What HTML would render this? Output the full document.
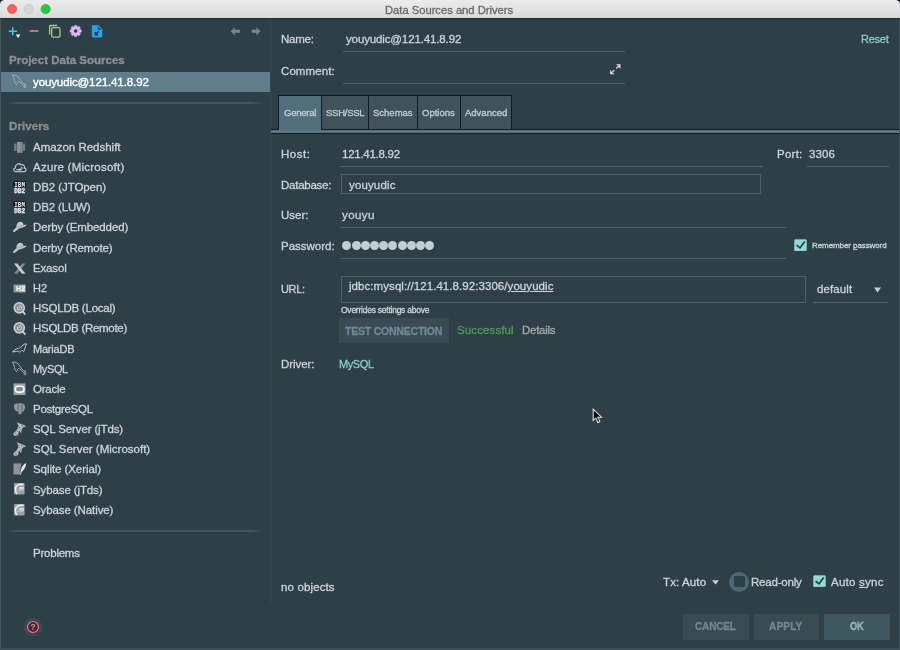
<!DOCTYPE html>
<html><head><meta charset="utf-8"><title>Data Sources and Drivers</title>
<style>
html,body{margin:0;padding:0;background:#2f3f47;}
body{width:900px;height:650px;position:relative;overflow:hidden;font-family:"Liberation Sans",sans-serif;}
.t{position:absolute;line-height:14px;white-space:nowrap;will-change:transform;-webkit-text-stroke:0.3px currentColor;}
.r{position:absolute;}
.ico{position:absolute;line-height:0;will-change:transform;}
#titlebar{position:absolute;left:0;top:0;width:900px;height:18px;background:linear-gradient(#ececec,#dadada);}
u{text-decoration:underline;text-underline-offset:1px;}
</style></head><body>
<div id="titlebar"></div>
<div class="r" style="left:0;top:18px;width:900px;height:1px;background:#222d33"></div>
<svg class="ico" style="left:0;top:0" width="60" height="18" viewBox="0 0 60 18"><circle cx="12.1" cy="9" r="4.6" fill="#fc5f57" stroke="#e0554e" stroke-width="0.7"/><circle cx="28.7" cy="9" r="4.6" fill="#d6d6d6" stroke="#c6c6c6" stroke-width="0.7"/><circle cx="45.6" cy="9" r="4.6" fill="#2ac840" stroke="#24b239" stroke-width="0.7"/></svg>
<div class="r" style="left:0;top:0;width:4px;height:4px;background:radial-gradient(circle at 100% 100%, rgba(30,38,43,0) 3.4px, #1e262b 4.2px)"></div>
<div class="r" style="left:896px;top:0;width:4px;height:4px;background:radial-gradient(circle at 0% 100%, rgba(30,38,43,0) 3.4px, #1e262b 4.2px)"></div>
<div class="t" id="title" style="left:385.00px;top:3.00px;font-size:11.2px;color:#686868;">Data Sources and Drivers</div>
<div class="ico" style="left:8px;top:25px"><svg width="14" height="14" viewBox="0 0 14 14"><path d="M0.7 6.2 H9 M4.75 2.2 V10.2" stroke="#4fc3dc" stroke-width="1.6" fill="none"/><path d="M7.9 9.4 H12.3 L10.1 12.9 Z" fill="#ffffff"/></svg></div>
<div class="ico" style="left:29px;top:25px"><svg width="10" height="14" viewBox="0 0 10 14"><path d="M0.7 6 H9.3" stroke="#e58173" stroke-width="1.7"/></svg></div>
<div class="ico" style="left:48px;top:24px"><svg width="13" height="14" viewBox="0 0 13 14"><path d="M1.6 10.6 V2.6 C1.6 1.9 2.1 1.5 2.7 1.5 H9.2" fill="none" stroke="#a5cf8d" stroke-width="1.3"/><rect x="3.7" y="3.7" width="8.3" height="9.4" rx="1.4" fill="none" stroke="#a5cf8d" stroke-width="1.3"/></svg></div>
<div class="ico" style="left:69px;top:24px"><svg width="14" height="14" viewBox="0 0 14 14"><polygon points="5.57,1.41 7.83,1.41 8.00,2.80 8.75,3.11 9.85,2.25 11.45,3.85 10.59,4.95 10.90,5.70 12.29,5.87 12.29,8.13 10.90,8.30 10.59,9.05 11.45,10.15 9.85,11.75 8.75,10.89 8.00,11.20 7.83,12.59 5.57,12.59 5.40,11.20 4.65,10.89 3.55,11.75 1.95,10.15 2.81,9.05 2.50,8.30 1.11,8.13 1.11,5.87 2.50,5.70 2.81,4.95 1.95,3.85 3.55,2.25 4.65,3.11 5.40,2.80" fill="#dcb6f2" stroke="#dcb6f2" stroke-width="0.6" stroke-linejoin="round"/><circle cx="6.7" cy="7.0" r="1.7" fill="#33304a"/></svg></div>
<div class="ico" style="left:91px;top:24px"><svg width="12" height="14" viewBox="0 0 12 14"><path d="M2 1.3 H7.4 L11.3 5.2 V12.3 C11.3 13 10.8 13.5 10.1 13.5 H2 C1.3 13.5 0.9 13 0.9 12.3 V2.5 C0.9 1.8 1.3 1.3 2 1.3 Z" fill="#2aa2e6"/><path d="M6.6 1.8 L10.8 6 H6.6 Z" fill="#1c5f90"/><path d="M7.8 7.2 L4.6 10.4 M4.2 8 V10.8 H7" stroke="#183a5a" stroke-width="1.4" fill="none"/></svg></div>
<div class="ico" style="left:229px;top:25px"><svg width="12" height="12" viewBox="0 0 12 12"><path d="M1.6 6.3 L5.8 2.2 V4.8 H10.9 V7.8 H5.8 V10.4 Z" fill="#7d8487"/></svg></div>
<div class="ico" style="left:249px;top:25px"><svg width="12" height="12" viewBox="0 0 12 12"><path d="M11.6 6.3 L7.4 2.2 V4.8 H2.6 V7.8 H7.4 V10.4 Z" fill="#7d8487"/></svg></div>
<div class="t" id="pds" style="left:9.00px;top:52.90px;font-size:11.5px;color:#8b9093;font-weight:bold;">Project Data Sources</div>
<div class="r" style="left:0px;top:71.5px;width:270px;height:20.2px;background:#5f7d8b;"></div>
<div class="ico" style="left:11px;top:73.2px"><svg width="16" height="16" viewBox="0 0 16 16"><path d="M1.5 2.2 C3.8 1.5 6.4 2.8 8.2 5.2 C9.4 6.8 10.2 8.6 11.6 10.0 C12.4 10.8 13.6 11.0 14.7 11.3 C14.2 11.8 13.6 12.0 13.3 12.4 C13.8 12.8 14.6 13.0 15.0 13.4 C14.4 13.8 14.2 14.2 14.3 14.9 C13.2 14.2 12.6 13.4 12.2 12.4 C11.2 11.4 9.8 9.8 8.4 8.6 C7.6 8.4 7.0 8.6 6.6 9.2 C6.6 10.2 6.2 11.0 5.6 11.6 C5.2 10.8 4.4 10.6 4.0 9.8 C3.4 8.2 3.6 6.4 2.8 4.8 C2.4 3.8 2.0 3.0 1.5 2.2 Z" fill="none" stroke="#a7b7bf" stroke-width="0.9"/></svg></div>
<div class="t" id="sel" style="left:33.00px;top:75.10px;font-size:11.5px;color:#ffffff;-webkit-text-stroke-width:0.38px;letter-spacing:-0.105px;">youyudic@121.41.8.92</div>
<div class="r" style="left:4px;top:102px;width:260px;height:2px;background:transparent;background:linear-gradient(90deg,rgba(70,87,95,0),#44555d 5%,#44555d 95%,rgba(70,87,95,0));opacity:.9;"></div>
<div class="t" id="drivers" style="left:9.00px;top:118.50px;font-size:11.5px;color:#8b9093;font-weight:bold;letter-spacing:0.100px;">Drivers</div>
<div class="ico" style="left:11px;top:138.70px"><svg width="16" height="16" viewBox="0 0 16 16"><rect x="3.2" y="4.6" width="2.4" height="7.4" fill="#737c80"/><rect x="6.1" y="3" width="2.9" height="10.8" fill="#8d9497"/><rect x="9.0" y="3" width="2.6" height="10.8" fill="#80888b"/><rect x="12" y="4.6" width="2.1" height="7.4" fill="#737c80"/></svg></div>
<div class="t" id="d0" style="left:33.00px;top:139.80px;font-size:11.5px;color:#ccd5d9;">Amazon Redshift</div>
<div class="ico" style="left:11px;top:158.86px"><svg width="16" height="16" viewBox="0 0 16 16"><path d="M4.6 12.6 C2.2 12.6 1.8 9.6 4.2 9.0 C4.0 5.8 7.8 3.4 10.0 5.8 C12.4 5.2 14.0 7.2 13.4 9.0 C15.6 9.2 15.6 12.6 13.2 12.6 Z" fill="none" stroke="#b9bfc2" stroke-width="1.3"/><path d="M5.4 10.6 H9.6 C11.4 10.6 11.6 8.4 9.8 8.2 M8.6 9.4 L10 10.6 L8.6 11.8" fill="none" stroke="#b9bfc2" stroke-width="1.1"/></svg></div>
<div class="t" id="d1" style="left:33.00px;top:159.96px;font-size:11.5px;color:#ccd5d9;letter-spacing:0.231px;">Azure (Microsoft)</div>
<div class="ico" style="left:11px;top:179.02px"><svg width="16" height="16" viewBox="0 0 16 16"><rect x="2.3" y="2.3" width="12.7" height="6.2" rx="1" fill="#0c1216"/><rect x="2.9" y="8.8" width="11.6" height="5" fill="#77818600"/><text x="8.65" y="7.5" font-family="Liberation Mono,monospace" font-weight="bold" font-size="6.4" fill="#f2f4f5" text-anchor="middle" textLength="10.6" lengthAdjust="spacingAndGlyphs">IBM</text><text x="8.65" y="13.6" font-family="Liberation Mono,monospace" font-weight="bold" font-size="6.8" fill="#e3e6e8" stroke="#e3e6e8" stroke-width="0.35" text-anchor="middle" textLength="10.8" lengthAdjust="spacingAndGlyphs">DB2</text></svg></div>
<div class="t" id="d2" style="left:33.00px;top:180.12px;font-size:11.5px;color:#ccd5d9;letter-spacing:-0.082px;">DB2 (JTOpen)</div>
<div class="ico" style="left:11px;top:199.18px"><svg width="16" height="16" viewBox="0 0 16 16"><rect x="2.3" y="2.3" width="12.7" height="6.2" rx="1" fill="#0c1216"/><rect x="2.9" y="8.8" width="11.6" height="5" fill="#77818600"/><text x="8.65" y="7.5" font-family="Liberation Mono,monospace" font-weight="bold" font-size="6.4" fill="#f2f4f5" text-anchor="middle" textLength="10.6" lengthAdjust="spacingAndGlyphs">IBM</text><text x="8.65" y="13.6" font-family="Liberation Mono,monospace" font-weight="bold" font-size="6.8" fill="#e3e6e8" stroke="#e3e6e8" stroke-width="0.35" text-anchor="middle" textLength="10.8" lengthAdjust="spacingAndGlyphs">DB2</text></svg></div>
<div class="t" id="d3" style="left:33.00px;top:200.28px;font-size:11.5px;color:#ccd5d9;letter-spacing:-0.150px;">DB2 (LUW)</div>
<div class="ico" style="left:11px;top:219.34px"><svg width="16" height="16" viewBox="0 0 16 16"><path d="M1.8 12.6 C2.4 10.4 4.2 9.6 5.2 8.4 C5.4 5.4 6.6 3 9 2.8 C11.4 2.6 12.4 4.4 12.6 6.2 C13.8 6.0 14.8 5.8 15.5 5.6 C15.2 7.2 13.6 8 11.6 8.4 C8.6 9 6.6 10.2 5.4 11.6 C4.4 12.8 3 13.4 1.8 12.6 Z" fill="#c3c8ca"/><path d="M5.4 8.3 C7.6 7.6 10.2 6.9 12.5 6.3" stroke="#8d9497" stroke-width="0.7" fill="none"/></svg></div>
<div class="t" id="d4" style="left:33.00px;top:220.44px;font-size:11.5px;color:#ccd5d9;letter-spacing:-0.127px;">Derby (Embedded)</div>
<div class="ico" style="left:11px;top:239.50px"><svg width="16" height="16" viewBox="0 0 16 16"><path d="M1.8 12.6 C2.4 10.4 4.2 9.6 5.2 8.4 C5.4 5.4 6.6 3 9 2.8 C11.4 2.6 12.4 4.4 12.6 6.2 C13.8 6.0 14.8 5.8 15.5 5.6 C15.2 7.2 13.6 8 11.6 8.4 C8.6 9 6.6 10.2 5.4 11.6 C4.4 12.8 3 13.4 1.8 12.6 Z" fill="#c3c8ca"/><path d="M5.4 8.3 C7.6 7.6 10.2 6.9 12.5 6.3" stroke="#8d9497" stroke-width="0.7" fill="none"/></svg></div>
<div class="t" id="d5" style="left:33.00px;top:240.60px;font-size:11.5px;color:#ccd5d9;letter-spacing:-0.177px;">Derby (Remote)</div>
<div class="ico" style="left:11px;top:259.66px"><svg width="16" height="16" viewBox="0 0 16 16"><polygon points="11.2,3.6 14.5,3.6 6.2,13.7 2.9,13.7" fill="#80888b"/><polygon points="2.9,3.6 6.4,3.6 14.5,13.7 11,13.7" fill="#c5cacc"/></svg></div>
<div class="t" id="d6" style="left:33.00px;top:260.76px;font-size:11.5px;color:#ccd5d9;letter-spacing:-0.160px;">Exasol</div>
<div class="ico" style="left:11px;top:279.82px"><svg width="16" height="16" viewBox="0 0 16 16"><defs><linearGradient id="h2g" x1="0" x2="1" y1="0" y2="0"><stop offset="0" stop-color="#8c9295"/><stop offset="1" stop-color="#b9bdbf"/></linearGradient></defs><rect x="2.5" y="4.6" width="12" height="7.8" fill="url(#h2g)"/><text x="9.6" y="11.4" font-family="Liberation Sans,sans-serif" font-weight="bold" font-size="7" fill="#ffffff" text-anchor="middle">H2</text></svg></div>
<div class="t" id="d7" style="left:33.00px;top:281.08px;font-size:11px;color:#ccd5d9;">H2</div>
<div class="ico" style="left:11px;top:299.98px"><svg width="16" height="16" viewBox="0 0 16 16"><path d="M11.6 11.4 L14.3 14.6" stroke="#c9cdce" stroke-width="1.7"/><circle cx="8.3" cy="7.8" r="5" fill="#868c8f" stroke="#c9cdce" stroke-width="1.7"/><path d="M8.6 7.9 C8.2 6.6 6.4 6.9 6.4 8.2 C6.4 10 9 10.6 10.2 9 C11.2 7.6 10.4 5.6 8.4 5.4" fill="none" stroke="#c9cdce" stroke-width="1.1"/></svg></div>
<div class="t" id="d8" style="left:33.00px;top:301.08px;font-size:11.5px;color:#ccd5d9;letter-spacing:-0.231px;">HSQLDB (Local)</div>
<div class="ico" style="left:11px;top:320.14px"><svg width="16" height="16" viewBox="0 0 16 16"><path d="M11.6 11.4 L14.3 14.6" stroke="#c9cdce" stroke-width="1.7"/><circle cx="8.3" cy="7.8" r="5" fill="#868c8f" stroke="#c9cdce" stroke-width="1.7"/><path d="M8.6 7.9 C8.2 6.6 6.4 6.9 6.4 8.2 C6.4 10 9 10.6 10.2 9 C11.2 7.6 10.4 5.6 8.4 5.4" fill="none" stroke="#c9cdce" stroke-width="1.1"/></svg></div>
<div class="t" id="d9" style="left:33.00px;top:321.24px;font-size:11.5px;color:#ccd5d9;letter-spacing:-0.300px;">HSQLDB (Remote)</div>
<div class="ico" style="left:11px;top:340.30px"><svg width="16" height="16" viewBox="0 0 16 16"><path d="M1.5 11.7 C2.8 11.3 3.6 9.8 5.0 9.1 C6.6 8.3 8.2 8.4 9.8 7.0 C11.4 5.6 12.6 3.9 15.3 3.8 C14.9 5.4 14.3 7.4 13.7 9.2 C13.4 10.2 13.2 11 12.6 11.6 C12.0 10.8 11.4 10.2 10.6 10.3 C9.8 10.5 9.4 11.6 8.7 12.3 C8.2 11.6 7.6 11.2 6.8 11.2 C5.0 11.2 3.2 12.2 1.5 11.7 Z" fill="none" stroke="#c3c8ca" stroke-width="1"/></svg></div>
<div class="t" id="d10" style="left:33.00px;top:341.56px;font-size:11px;color:#ccd5d9;letter-spacing:-0.217px;">MariaDB</div>
<div class="ico" style="left:11px;top:360.46px"><svg width="16" height="16" viewBox="0 0 16 16"><path d="M1.5 2.2 C3.8 1.5 6.4 2.8 8.2 5.2 C9.4 6.8 10.2 8.6 11.6 10.0 C12.4 10.8 13.6 11.0 14.7 11.3 C14.2 11.8 13.6 12.0 13.3 12.4 C13.8 12.8 14.6 13.0 15.0 13.4 C14.4 13.8 14.2 14.2 14.3 14.9 C13.2 14.2 12.6 13.4 12.2 12.4 C11.2 11.4 9.8 9.8 8.4 8.6 C7.6 8.4 7.0 8.6 6.6 9.2 C6.6 10.2 6.2 11.0 5.6 11.6 C5.2 10.8 4.4 10.6 4.0 9.8 C3.4 8.2 3.6 6.4 2.8 4.8 C2.4 3.8 2.0 3.0 1.5 2.2 Z" fill="none" stroke="#b4babd" stroke-width="0.9"/></svg></div>
<div class="t" id="d11" style="left:33.00px;top:361.72px;font-size:11px;color:#ccd5d9;letter-spacing:-0.375px;">MySQL</div>
<div class="ico" style="left:11px;top:380.62px"><svg width="16" height="16" viewBox="0 0 16 16"><rect x="2.5" y="2.4" width="12" height="11.6" fill="#9da2a4"/><rect x="4.2" y="5.3" width="8.8" height="5.8" rx="2.9" fill="#858b8e" stroke="#f4f5f5" stroke-width="1.6"/></svg></div>
<div class="t" id="d12" style="left:33.00px;top:381.72px;font-size:11.5px;color:#ccd5d9;letter-spacing:-0.260px;">Oracle</div>
<div class="ico" style="left:11px;top:400.78px"><svg width="16" height="16" viewBox="0 0 16 16"><path d="M3 6.4 C2.4 3.4 4.6 2.0 7.0 2.8 C9.2 1.8 14.2 2.2 14.0 6.0 C13.9 8.0 13.2 9.6 12.2 10.6 C11.6 11.2 10.9 10.8 10.8 10.0 L10.6 12.6 C9.6 13.8 7.8 13.6 7.4 12.4 L7.2 9.8 C6.4 10.8 5.0 10.6 4.4 9.6 C3.6 8.6 3.2 7.6 3 6.4 Z" fill="#8e9497"/><path d="M7.3 3.6 C7.0 6 7.0 8 7.3 9.8 M10.4 3.8 C11.2 5.6 11 8 10.7 10" stroke="#5f686c" stroke-width="0.8" fill="none"/></svg></div>
<div class="t" id="d13" style="left:33.00px;top:401.88px;font-size:11.5px;color:#ccd5d9;letter-spacing:-0.289px;">PostgreSQL</div>
<div class="ico" style="left:11px;top:420.94px"><svg width="16" height="16" viewBox="0 0 16 16"><path d="M5.8 1.6 C7.8 1.2 9.2 3.2 11.4 3.6 C12.8 3.9 14 4.4 15.2 5.4 C13.2 5.6 11.6 6.4 11.0 7.8 C10.4 9.4 10.8 11 9.8 12.6 C9.4 11.2 9.0 10.4 8.2 9.8 C7.4 11.0 7.6 12.4 7.2 14.0 C6.0 14.8 4.2 15 2.6 14.2 C2.2 13.0 2.6 11.8 3.6 11.2 C4.8 10.4 5.8 9.4 6.4 7.8 C6.9 6.4 7.4 5.2 7.0 3.8 C6.8 3.0 6.4 2.2 5.8 1.6 Z" fill="#b9bec0"/><path d="M6 3 L8 5 M7 7 L9.4 6.2 M5.6 10 L7.4 10.8 M4 12 L5.8 13.4 M9.6 8.2 L10.4 9.6 M10 4.6 L12.4 5.2" stroke="#59646a" stroke-width="0.7" fill="none"/></svg></div>
<div class="t" id="d14" style="left:33.00px;top:422.04px;font-size:11.5px;color:#ccd5d9;letter-spacing:-0.131px;">SQL Server (jTds)</div>
<div class="ico" style="left:11px;top:441.10px"><svg width="16" height="16" viewBox="0 0 16 16"><path d="M5.8 1.6 C7.8 1.2 9.2 3.2 11.4 3.6 C12.8 3.9 14 4.4 15.2 5.4 C13.2 5.6 11.6 6.4 11.0 7.8 C10.4 9.4 10.8 11 9.8 12.6 C9.4 11.2 9.0 10.4 8.2 9.8 C7.4 11.0 7.6 12.4 7.2 14.0 C6.0 14.8 4.2 15 2.6 14.2 C2.2 13.0 2.6 11.8 3.6 11.2 C4.8 10.4 5.8 9.4 6.4 7.8 C6.9 6.4 7.4 5.2 7.0 3.8 C6.8 3.0 6.4 2.2 5.8 1.6 Z" fill="#b9bec0"/><path d="M6 3 L8 5 M7 7 L9.4 6.2 M5.6 10 L7.4 10.8 M4 12 L5.8 13.4 M9.6 8.2 L10.4 9.6 M10 4.6 L12.4 5.2" stroke="#59646a" stroke-width="0.7" fill="none"/></svg></div>
<div class="t" id="d15" style="left:33.00px;top:442.20px;font-size:11.5px;color:#ccd5d9;">SQL Server (Microsoft)</div>
<div class="ico" style="left:11px;top:461.26px"><svg width="16" height="16" viewBox="0 0 16 16"><path d="M2.5 2.6 H10.6 C9.6 5.6 9.2 9 9.0 13.6 H2.5 Z" fill="#8d9396"/><path d="M15.3 2.0 C12.4 3.0 10.6 5.8 9.8 9.2 C9.5 10.6 9.2 12.2 9.3 14.0 L9.9 14.0 C10.1 12.4 10.5 11.4 10.9 10.8 C12.9 9.0 14.9 6.2 15.3 2.0 Z" fill="#e4e7e8"/></svg></div>
<div class="t" id="d16" style="left:33.00px;top:462.36px;font-size:11.5px;color:#ccd5d9;letter-spacing:-0.071px;">Sqlite (Xerial)</div>
<div class="ico" style="left:11px;top:481.42px"><svg width="16" height="16" viewBox="0 0 16 16"><rect x="2.9" y="1.9" width="10.7" height="11.6" rx="1.2" fill="#999fa2"/><path d="M12.6 3.6 C8 2.6 4.4 4.6 4.4 8.6 C4.4 10.8 5.2 12.2 6.2 12.8" fill="none" stroke="#f2f3f4" stroke-width="1.5"/><path d="M8.4 6.0 H12.8 V8.6 H8.4" fill="#d5d8da"/><path d="M4.6 9.2 H12.8" stroke="#c4c8ca" stroke-width="0.8"/></svg></div>
<div class="t" id="d17" style="left:33.00px;top:482.52px;font-size:11.5px;color:#ccd5d9;letter-spacing:-0.117px;">Sybase (jTds)</div>
<div class="ico" style="left:11px;top:501.58px"><svg width="16" height="16" viewBox="0 0 16 16"><rect x="2.9" y="1.9" width="10.7" height="11.6" rx="1.2" fill="#999fa2"/><path d="M12.6 3.6 C8 2.6 4.4 4.6 4.4 8.6 C4.4 10.8 5.2 12.2 6.2 12.8" fill="none" stroke="#f2f3f4" stroke-width="1.5"/><path d="M8.4 6.0 H12.8 V8.6 H8.4" fill="#d5d8da"/><path d="M4.6 9.2 H12.8" stroke="#c4c8ca" stroke-width="0.8"/></svg></div>
<div class="t" id="d18" style="left:33.00px;top:502.68px;font-size:11.5px;color:#ccd5d9;letter-spacing:-0.100px;">Sybase (Native)</div>
<div class="r" style="left:4px;top:530px;width:260px;height:2px;background:transparent;background:linear-gradient(90deg,rgba(70,87,95,0),#44555d 5%,#44555d 95%,rgba(70,87,95,0));opacity:.9;"></div>
<div class="t" id="problems" style="left:33.00px;top:545.60px;font-size:11.5px;color:#ccd5d9;letter-spacing:-0.229px;">Problems</div>
<div class="ico" style="left:23px;top:617px"><svg width="20" height="20" viewBox="0 0 20 20"><circle cx="10" cy="10" r="9.2" fill="#384a53"/><circle cx="10" cy="10" r="6.6" fill="#7a2135"/><circle cx="10" cy="10" r="5.5" fill="#4a2631" stroke="#dd8a9a" stroke-width="1.15"/><text x="10" y="13.1" font-family="Liberation Sans,sans-serif" font-weight="bold" font-size="8.4" fill="#dc8c9b" text-anchor="middle">?</text></svg></div>
<div class="r" style="left:270px;top:19px;width:1px;height:585px;background:#364850;"></div>
<div class="t" id="lname" style="left:281.00px;top:32.20px;font-size:11.5px;color:#ccd5d9;letter-spacing:-0.250px;">Name:</div>
<div class="t" id="vname" style="left:345.60px;top:32.20px;font-size:11.5px;color:#ccd5d9;letter-spacing:-0.132px;">youyudic@121.41.8.92</div>
<div class="t" id="reset" style="left:861.00px;top:32.36px;font-size:11px;color:#86cfc8;letter-spacing:-0.250px;">Reset</div>
<div class="r" style="left:343px;top:50.5px;width:282px;height:1px;background:#4a626d;"></div>
<div class="t" id="lcomment" style="left:281.00px;top:63.60px;font-size:11.5px;color:#ccd5d9;letter-spacing:0.086px;">Comment:</div>
<div class="r" style="left:343px;top:83px;width:282px;height:1px;background:#4a626d;"></div>
<div class="ico" style="left:610.3px;top:64.2px"><svg width="10.8" height="10.8" viewBox="0 0 12 12"><path d="M7.2 0.9 H11 V4.7 M11 0.9 L6.9 5 M4.6 10.8 H0.8 V7 M0.8 10.8 L4.9 6.7" stroke="#f0dcf0" stroke-width="1.25" fill="none"/></svg></div>
<div class="r" style="left:278px;top:95px;width:234px;height:35px;background:#0d1d26;"></div>
<div class="r" style="left:279px;top:96px;width:42px;height:35px;background:#516e7b;"></div>
<div class="t" id="tab0" style="left:284.00px;top:105.56px;font-size:9.5px;color:#c4cfd4;letter-spacing:-0.250px;">General</div>
<div class="r" style="left:322px;top:96px;width:46px;height:33px;background:#42525a;"></div>
<div class="t" id="tab1" style="left:326.00px;top:105.56px;font-size:9.5px;color:#c4cfd4;letter-spacing:-0.250px;">SSH/SSL</div>
<div class="r" style="left:369px;top:96px;width:48px;height:33px;background:#42525a;"></div>
<div class="t" id="tab2" style="left:373.00px;top:105.56px;font-size:9.5px;color:#c4cfd4;">Schemas</div>
<div class="r" style="left:418px;top:96px;width:42px;height:33px;background:#42525a;"></div>
<div class="t" id="tab3" style="left:422.00px;top:105.56px;font-size:9.5px;color:#c4cfd4;">Options</div>
<div class="r" style="left:461px;top:96px;width:50px;height:33px;background:#42525a;"></div>
<div class="t" id="tab4" style="left:465.00px;top:105.56px;font-size:9.5px;color:#c4cfd4;">Advanced</div>
<div class="r" style="left:271px;top:128.9px;width:8px;height:1.1px;background:#0b1c26;"></div>
<div class="r" style="left:321px;top:128.9px;width:579px;height:1.1px;background:#0b1c26;"></div>
<div class="r" style="left:271px;top:130px;width:629px;height:2.6px;background:#5a7480;"></div>
<div class="r" style="left:271px;top:132.6px;width:629px;height:1.4px;background:#0d1f29;"></div>
<div class="t" id="lhost" style="left:281.00px;top:147.20px;font-size:11.5px;color:#ccd5d9;letter-spacing:0.500px;">Host:</div>
<div class="t" id="vhost" style="left:342.00px;top:147.20px;font-size:11.5px;color:#ccd5d9;letter-spacing:-0.260px;">121.41.8.92</div>
<div class="r" style="left:340px;top:166px;width:423px;height:1px;background:#4a626d;"></div>
<div class="t" id="lport" style="left:776.60px;top:147.20px;font-size:11.5px;color:#ccd5d9;letter-spacing:0.250px;">Port:</div>
<div class="t" id="vport" style="left:809.40px;top:147.20px;font-size:11.5px;color:#ccd5d9;letter-spacing:0.067px;">3306</div>
<div class="r" style="left:807px;top:166px;width:82px;height:1px;background:#4a626d;"></div>
<div class="t" id="ldb" style="left:281.00px;top:177.80px;font-size:11.5px;color:#ccd5d9;letter-spacing:-0.250px;">Database:</div>
<div class="r" style="left:341px;top:174px;width:420px;height:20px;box-sizing:border-box;border:1px solid #4a5f69"></div>
<div class="t" id="vdb" style="left:349.00px;top:177.80px;font-size:11.5px;color:#ccd5d9;letter-spacing:0.143px;">youyudic</div>
<div class="t" id="luser" style="left:281.00px;top:207.80px;font-size:11.5px;color:#ccd5d9;">User:</div>
<div class="t" id="vuser" style="left:342.00px;top:207.80px;font-size:11.5px;color:#ccd5d9;letter-spacing:0.400px;">youyu</div>
<div class="r" style="left:340px;top:226.5px;width:445.5px;height:1px;background:#4a626d;"></div>
<div class="t" id="lpw" style="left:281.00px;top:238.60px;font-size:11.5px;color:#ccd5d9;">Password:</div>
<div class="r" style="left:342.40px;top:241.10px;width:9px;height:9px;border-radius:50%;background:#c3ced3"></div>
<div class="r" style="left:351.60px;top:241.10px;width:9px;height:9px;border-radius:50%;background:#c3ced3"></div>
<div class="r" style="left:360.80px;top:241.10px;width:9px;height:9px;border-radius:50%;background:#c3ced3"></div>
<div class="r" style="left:370.00px;top:241.10px;width:9px;height:9px;border-radius:50%;background:#c3ced3"></div>
<div class="r" style="left:379.20px;top:241.10px;width:9px;height:9px;border-radius:50%;background:#c3ced3"></div>
<div class="r" style="left:388.40px;top:241.10px;width:9px;height:9px;border-radius:50%;background:#c3ced3"></div>
<div class="r" style="left:397.60px;top:241.10px;width:9px;height:9px;border-radius:50%;background:#c3ced3"></div>
<div class="r" style="left:406.80px;top:241.10px;width:9px;height:9px;border-radius:50%;background:#c3ced3"></div>
<div class="r" style="left:416.00px;top:241.10px;width:9px;height:9px;border-radius:50%;background:#c3ced3"></div>
<div class="r" style="left:425.20px;top:241.10px;width:9px;height:9px;border-radius:50%;background:#c3ced3"></div>
<div class="r" style="left:340px;top:257.7px;width:445.5px;height:1px;background:#4a626d;"></div>
<div class="ico" style="left:794.4px;top:239px"><svg width="13" height="12.4" viewBox="0 0 13 12.4"><rect x="0.4" y="0.4" width="12.2" height="11.6" rx="1.6" fill="#95d8d4" stroke="#72bfb9" stroke-width="0.8"/><path d="M2.6 6.1 L6.0 8.9 L10.7 2.5" stroke="#183f40" stroke-width="1.7" fill="none"/></svg></div>
<div class="t" id="remember" style="left:812.40px;top:238.96px;font-size:8px;color:#ccd5d9;letter-spacing:-0.088px;">Remember <u>p</u>assword</div>
<div class="t" id="lurl" style="left:281.00px;top:282.36px;font-size:11px;color:#ccd5d9;letter-spacing:-0.333px;">URL:</div>
<div class="r" style="left:341px;top:275.5px;width:465px;height:27px;box-sizing:border-box;border:1px solid #4a5f69"></div>
<div class="t" id="vurl" style="left:348.60px;top:278.60px;font-size:11.5px;color:#ccd5d9;letter-spacing:0.065px;">jdbc:mysql://121.41.8.92:3306/<u>youyudic</u></div>
<div class="t" id="vdefault" style="left:817.40px;top:282.20px;font-size:11.5px;color:#ccd5d9;letter-spacing:0.100px;">default</div>
<svg class="ico" style="left:874px;top:287px" width="7" height="6" viewBox="0 0 7 6"><path d="M0 0.4 H7 L3.5 5.6Z" fill="#c7d1d6"/></svg>
<div class="r" style="left:813.4px;top:302px;width:75px;height:1px;background:#4a626d;"></div>
<div class="t" id="overrides" style="left:341.20px;top:302.89px;font-size:8.5px;color:#ccd5d9;letter-spacing:-0.243px;">Overrides settings above</div>
<div class="r" style="left:339px;top:317.5px;width:110px;height:25.5px;background:#3a4b53;"></div>
<div class="t" id="test" style="left:345.00px;top:323.53px;font-size:10.5px;color:#6d8995;font-weight:bold;letter-spacing:-0.214px;">TEST CONNECTION</div>
<div class="t" id="succ" style="left:457.00px;top:323.20px;font-size:11.5px;color:#4f9b58;letter-spacing:0.111px;">Successful</div>
<div class="t" id="details" style="left:521.60px;top:323.20px;font-size:11.5px;color:#a3a8aa;letter-spacing:-0.267px;">Details</div>
<div class="t" id="ldriver" style="left:281.00px;top:356.80px;font-size:11.5px;color:#ccd5d9;letter-spacing:-0.067px;">Driver:</div>
<div class="t" id="vdriver" style="left:339.00px;top:356.96px;font-size:11px;color:#86cfc8;letter-spacing:-0.400px;">MySQL</div>
<div class="t" id="noobj" style="left:280.80px;top:579.50px;font-size:11.5px;color:#ccd5d9;letter-spacing:0.133px;">no objects</div>
<div class="t" id="tx" style="left:662.70px;top:574.80px;font-size:11.5px;color:#ccd5d9;letter-spacing:0.129px;">Tx: Auto</div>
<svg class="ico" style="left:711.6px;top:579.8px" width="7" height="5" viewBox="0 0 7 5"><path d="M0 0.3 H7 L3.5 4.6Z" fill="#c7d1d6"/></svg>
<div class="r" style="left:729.3px;top:571.6px;width:20px;height:20px;border-radius:50%;background:#4b6a72"></div>
<div class="r" style="left:734.2px;top:576.2px;width:11.2px;height:11.2px;border-radius:1.5px;background:#2f3f47"></div>
<div class="t" id="ro" style="left:751.40px;top:574.90px;font-size:11.5px;color:#ccd5d9;letter-spacing:-0.200px;">Read-only</div>
<div class="ico" style="left:813px;top:575.3px"><svg width="13" height="12.4" viewBox="0 0 13 12.4"><rect x="0.4" y="0.4" width="12.2" height="11.6" rx="1.6" fill="#95d8d4" stroke="#72bfb9" stroke-width="0.8"/><path d="M2.6 6.1 L6.0 8.9 L10.7 2.5" stroke="#183f40" stroke-width="1.7" fill="none"/></svg></div>
<div class="t" id="as" style="left:831.00px;top:574.90px;font-size:11.5px;color:#ccd5d9;letter-spacing:0.250px;">Auto <u>s</u>ync</div>
<div class="r" style="left:683px;top:614px;width:65.75px;height:25.5px;background:#3a4b53;"></div>
<div class="r" style="left:753.75px;top:614px;width:65.5px;height:25.5px;background:#3a4b53;"></div>
<div class="r" style="left:824.25px;top:614px;width:65.75px;height:25.5px;background:#3f575e;"></div>
<div class="t" id="bcancel" style="left:695.00px;top:620.20px;font-size:10px;color:#6d8995;font-weight:bold;letter-spacing:-0.150px;">CANCEL</div>
<div class="t" id="bapply" style="left:769.25px;top:620.20px;font-size:10px;color:#6d8995;font-weight:bold;letter-spacing:0.188px;">APPLY</div>
<div class="t" id="bok" style="left:850.00px;top:620.20px;font-size:10px;color:#9db9c3;font-weight:bold;transform:scaleX(0.92);transform-origin:0 0;">OK</div>
<div class="ico" style="left:591.7px;top:407.9px"><svg width="11.9" height="16.5" viewBox="0 0 13 18"><path d="M1.3 1.2 V13.6 L4.2 10.9 L6.4 15.9 L8.6 14.9 L6.4 10.1 H10.4 Z" fill="#000" stroke="#e8eaec" stroke-width="1.1" stroke-linejoin="miter"/></svg></div>
<div class="r" style="left:0px;top:19px;width:1px;height:631px;background:#46565e;"></div>
<div class="r" style="left:0px;top:648.4px;width:900px;height:1.6px;background:#3d4d55;"></div>
<div class="r" style="left:898.8px;top:19px;width:1.2px;height:631px;background:#44545c;"></div>
</body></html>
